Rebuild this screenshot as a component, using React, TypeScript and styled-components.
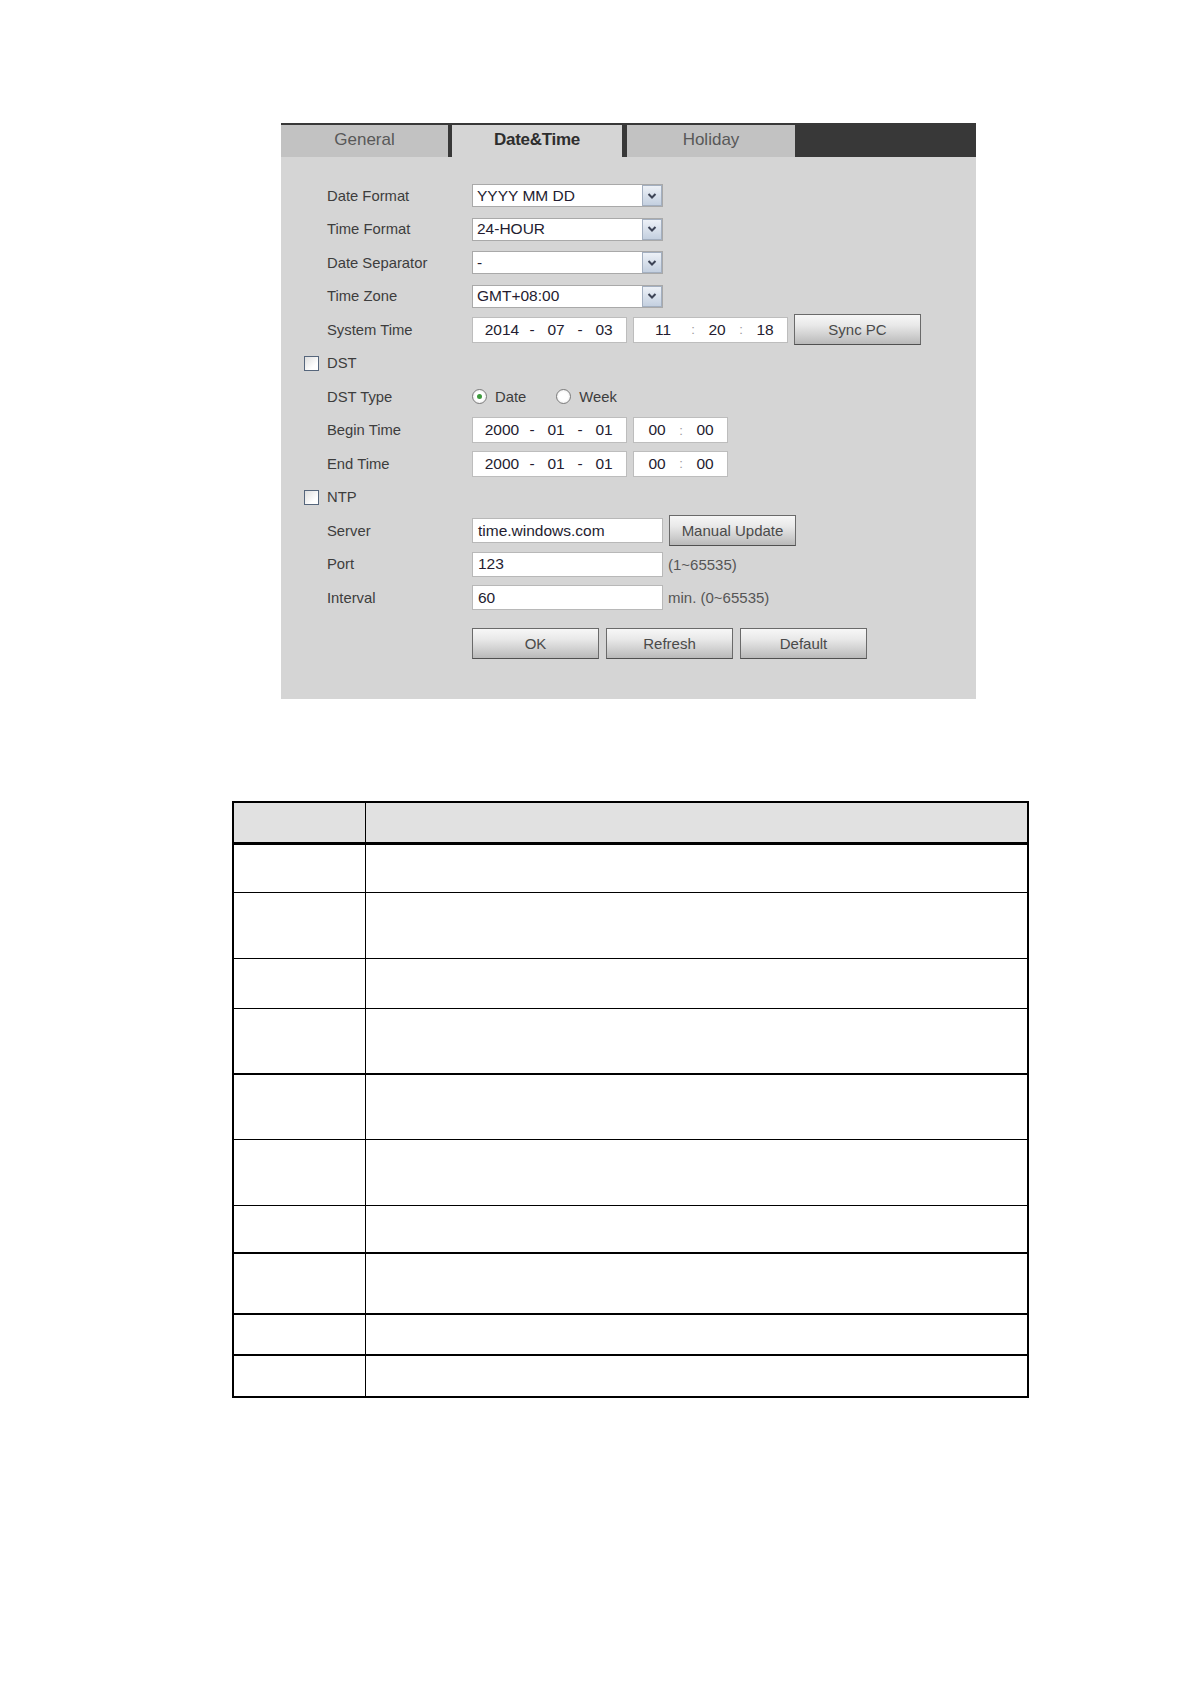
import React from "react";
import styled, { createGlobalStyle } from "styled-components";

const Global = createGlobalStyle`
  html, body { margin: 0; padding: 0; background: #ffffff; }
  body { font-family: "Liberation Sans", Arial, sans-serif; }
  * { box-sizing: border-box; }
`;

const Page = styled.div`
  width: 1191px;
  min-height: 1684px;
  padding-top: 123px;
`;

const Panel = styled.section`
  margin-left: 281px;
  width: 695px;
  height: 576px;
  background: #d5d5d5;
`;

const TabBar = styled.div`
  display: flex;
  height: 34px;
  background: #383838;
  padding-top: 2px;
`;

const Tab = styled.div<{ $w: number; $gap: number; $active?: boolean }>`
  width: ${(p) => p.$w}px;
  margin-right: ${(p) => p.$gap}px;
  display: flex;
  align-items: center;
  justify-content: center;
  padding-bottom: 2px;
  background: ${(p) => (p.$active ? "#d5d5d5" : "#c2c2c2")};
  color: ${(p) => (p.$active ? "#2e2e2e" : "#585858")};
  font-size: 17px;
  font-weight: ${(p) => (p.$active ? 700 : 400)};
  letter-spacing: ${(p) => (p.$active ? "-0.3px" : "0")};
`;

const Form = styled.div`
  padding: 22px 0 0 23px;
`;

const Row = styled.div`
  display: flex;
  align-items: center;
  height: 33.5px;
`;

const Lead = styled.div`
  width: 23px;
  display: flex;
  align-items: center;
`;

const Label = styled.div`
  width: 145px;
  font-size: 14.8px;
  color: #3d3d3d;
`;

const Field = styled.div<{ $gap?: number }>`
  display: flex;
  align-items: center;
  gap: ${(p) => p.$gap ?? 6}px;
`;

const SelectBox = styled.div`
  width: 191px;
  height: 23px;
  display: flex;
  background: #ffffff;
  border: 1px solid #a9a9a9;
`;

const SelectText = styled.div`
  flex: 1;
  display: flex;
  align-items: center;
  padding-left: 4px;
  font-size: 15.5px;
  color: #241c30;
`;

const DropBtn = styled.span`
  width: 20px;
  display: flex;
  align-items: center;
  justify-content: center;
  background: linear-gradient(#edf1f7, #c4d0e0);
  border: 1px solid #a3afc0;
`;

const TextBox = styled.div`
  width: 191px;
  height: 25px;
  display: flex;
  align-items: center;
  padding-left: 5px;
  background: #ffffff;
  border: 1px solid #b8b8b8;
  font-size: 15.5px;
  color: #241c30;
`;

const DateBox = styled.div<{ $w: number; $pad: number }>`
  width: ${(p) => p.$w}px;
  height: 26px;
  display: flex;
  align-items: center;
  padding-left: ${(p) => p.$pad}px;
  background: #ffffff;
  border: 1px solid #bdbdbd;
  font-size: 15.5px;
  color: #241c30;
`;

const Part = styled.span<{ $w: number; $light?: boolean }>`
  width: ${(p) => p.$w}px;
  text-align: center;
  color: ${(p) => (p.$light ? "#9a9a9a" : "inherit")};
  font-size: ${(p) => (p.$light ? "13px" : "inherit")};
`;

const Btn = styled.button`
  width: 127px;
  height: 31px;
  padding: 0;
  border: 1px solid #6a6a6a;
  border-bottom-color: #505050;
  background: linear-gradient(#f7f7f7, #e9e9e9 35%, #d0d0d0 70%, #b9b9b9);
  font-family: "Liberation Sans", Arial, sans-serif;
  font-size: 15px;
  color: #4a4a4a;
`;

const Note = styled.span`
  font-size: 15px;
  color: #555555;
`;

const Check = styled.span`
  width: 15px;
  height: 15px;
  border: 1.5px solid #56667c;
  background: linear-gradient(135deg, #dedede, #ffffff 70%);
`;

const RadioItem = styled.label<{ $gapAfter?: number }>`
  display: flex;
  align-items: center;
  gap: 8px;
  margin-right: ${(p) => p.$gapAfter ?? 0}px;
  font-size: 14.8px;
  color: #3d3d3d;
`;

const RadioCircle = styled.span<{ $on?: boolean }>`
  width: 15px;
  height: 15px;
  border-radius: 50%;
  border: 1px solid #7b7b7b;
  background: radial-gradient(circle, #ffffff 45%, #e2e2e2);
  display: flex;
  align-items: center;
  justify-content: center;
  &::after {
    content: "";
    width: 5px;
    height: 5px;
    border-radius: 50%;
    background: ${(p) => (p.$on ? "#3c9a3c" : "transparent")};
  }
`;

const ButtonRow = styled.div`
  display: flex;
  gap: 7px;
  margin-top: 13px;
  padding-left: 168px;
`;

const Table = styled.div`
  margin: 102px 0 0 232px;
  width: 797px;
  border: 2px solid #000000;
`;

const TRow = styled.div<{ $h: number; $b: number; $head?: boolean }>`
  display: grid;
  grid-template-columns: 132px 1fr;
  height: ${(p) => p.$h}px;
  border-bottom: ${(p) => p.$b}px solid #000000;
  background: ${(p) => (p.$head ? "#e1e1e1" : "#ffffff")};
`;

const TCell = styled.div`
  border-right: 1.5px solid #000000;
`;

const Chevron = () => (
  <svg width="10" height="8" viewBox="0 0 10 8">
    <polyline points="1.5,2 5,5.5 8.5,2" fill="none" stroke="#3d4456" strokeWidth="2" />
  </svg>
);

const Select = ({ value }: { value: string }) => (
  <SelectBox>
    <SelectText>{value}</SelectText>
    <DropBtn>
      <Chevron />
    </DropBtn>
  </SelectBox>
);

const DateField = ({ y, m, d }: { y: string; m: string; d: string }) => (
  <DateBox $w={155} $pad={9}>
    <Part $w={40}>{y}</Part>
    <Part $w={20}>-</Part>
    <Part $w={28}>{m}</Part>
    <Part $w={20}>-</Part>
    <Part $w={28}>{d}</Part>
  </DateBox>
);

const TimeField3 = ({ h, m, s }: { h: string; m: string; s: string }) => (
  <DateBox $w={155} $pad={9}>
    <Part $w={40}>{h}</Part>
    <Part $w={20} $light>:</Part>
    <Part $w={28}>{m}</Part>
    <Part $w={20} $light>:</Part>
    <Part $w={28}>{s}</Part>
  </DateBox>
);

const TimeField2 = ({ h, m }: { h: string; m: string }) => (
  <DateBox $w={95} $pad={5}>
    <Part $w={36}>{h}</Part>
    <Part $w={12} $light>:</Part>
    <Part $w={36}>{m}</Part>
  </DateBox>
);

const rows: { h: number; b: number }[] = [
  { h: 48, b: 1 },
  { h: 66, b: 1 },
  { h: 50, b: 1 },
  { h: 66, b: 2 },
  { h: 65, b: 1 },
  { h: 66, b: 1 },
  { h: 48, b: 2 },
  { h: 61, b: 2 },
  { h: 41, b: 2 },
  { h: 40, b: 0 },
];

export default function App() {
  return (
    <Page>
      <Global />
      <Panel>
        <TabBar>
          <Tab $w={167} $gap={4}>General</Tab>
          <Tab $w={170} $gap={5} $active>Date&amp;Time</Tab>
          <Tab $w={168} $gap={0}>Holiday</Tab>
        </TabBar>
        <Form>
          <Row>
            <Lead />
            <Label>Date Format</Label>
            <Field><Select value="YYYY MM DD" /></Field>
          </Row>
          <Row>
            <Lead />
            <Label>Time Format</Label>
            <Field><Select value="24-HOUR" /></Field>
          </Row>
          <Row>
            <Lead />
            <Label>Date Separator</Label>
            <Field><Select value="-" /></Field>
          </Row>
          <Row>
            <Lead />
            <Label>Time Zone</Label>
            <Field><Select value="GMT+08:00" /></Field>
          </Row>
          <Row>
            <Lead />
            <Label>System Time</Label>
            <Field>
              <DateField y="2014" m="07" d="03" />
              <TimeField3 h="11" m="20" s="18" />
              <Btn>Sync PC</Btn>
            </Field>
          </Row>
          <Row>
            <Lead><Check /></Lead>
            <Label>DST</Label>
          </Row>
          <Row>
            <Lead />
            <Label>DST Type</Label>
            <Field $gap={0}>
              <RadioItem $gapAfter={30}>
                <RadioCircle $on />
                Date
              </RadioItem>
              <RadioItem>
                <RadioCircle />
                Week
              </RadioItem>
            </Field>
          </Row>
          <Row>
            <Lead />
            <Label>Begin Time</Label>
            <Field>
              <DateField y="2000" m="01" d="01" />
              <TimeField2 h="00" m="00" />
            </Field>
          </Row>
          <Row>
            <Lead />
            <Label>End Time</Label>
            <Field>
              <DateField y="2000" m="01" d="01" />
              <TimeField2 h="00" m="00" />
            </Field>
          </Row>
          <Row>
            <Lead><Check /></Lead>
            <Label>NTP</Label>
          </Row>
          <Row>
            <Lead />
            <Label>Server</Label>
            <Field>
              <TextBox>time.windows.com</TextBox>
              <Btn>Manual Update</Btn>
            </Field>
          </Row>
          <Row>
            <Lead />
            <Label>Port</Label>
            <Field $gap={5}>
              <TextBox>123</TextBox>
              <Note>(1~65535)</Note>
            </Field>
          </Row>
          <Row>
            <Lead />
            <Label>Interval</Label>
            <Field $gap={5}>
              <TextBox>60</TextBox>
              <Note>min. (0~65535)</Note>
            </Field>
          </Row>
          <ButtonRow>
            <Btn>OK</Btn>
            <Btn>Refresh</Btn>
            <Btn>Default</Btn>
          </ButtonRow>
        </Form>
      </Panel>
      <Table>
        <TRow $h={42} $b={3} $head>
          <TCell />
          <div />
        </TRow>
        {rows.map((r, i) => (
          <TRow key={i} $h={r.h} $b={r.b}>
            <TCell />
            <div />
          </TRow>
        ))}
      </Table>
    </Page>
  );
}
